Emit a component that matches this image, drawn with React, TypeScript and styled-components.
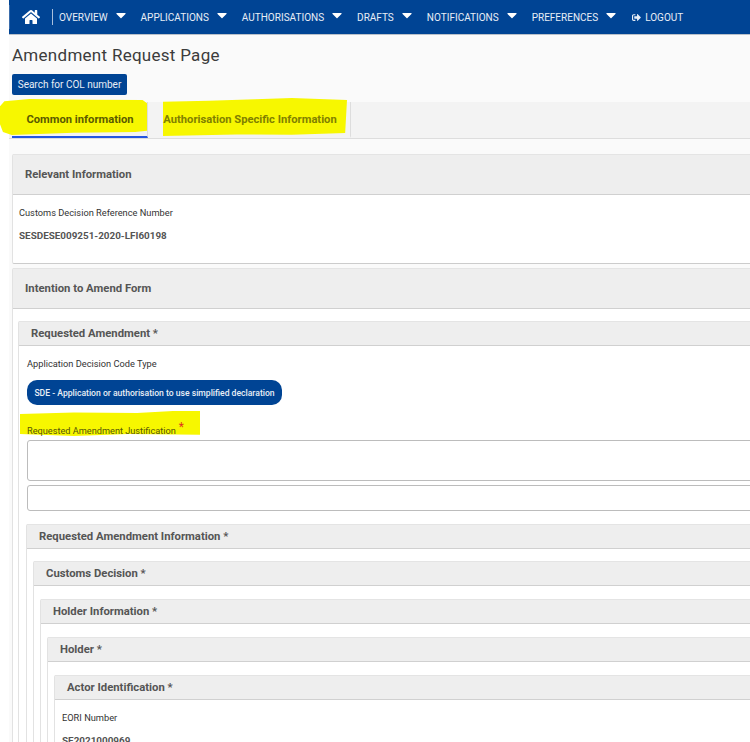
import styled, { createGlobalStyle } from 'styled-components';
import { FaHome, FaCaretDown, FaSignOutAlt } from 'react-icons/fa';

const GlobalStyle = createGlobalStyle`
  html, body {
    margin: 0;
    padding: 0;
    background: #fff;
    overflow: hidden;
  }
  * {
    box-sizing: border-box;
  }
`;

const Page = styled.div`
  width: 750px;
  height: 742px;
  overflow: hidden;
  padding-left: 9px;
  font-family: Roboto, 'Liberation Sans', sans-serif;
  color: #444;
`;

const Canvas = styled.div`
  width: 800px;
  height: 742px;
  background: #fafafa;
`;

const NavBar = styled.nav`
  height: 35px;
  background: #004494;
  border-bottom: 1px solid #b9c0c9;
  display: flex;
  align-items: center;
  color: #e8eef6;
  font-size: 10px;
`;

const HomeLink = styled.div`
  width: 43px;
  height: 24px;
  padding-left: 12px;
  border-left: 1px solid #3a6cab;
  display: flex;
  align-items: center;
  svg {
    font-size: 18px;
    color: #fff;
  }
`;

const NavDivider = styled.span`
  width: 1px;
  height: 16px;
  background: #a9bfdc;
  margin-right: 6px;
`;

const NavItem = styled.div`
  display: flex;
  align-items: center;
  margin-right: 12px;
  white-space: nowrap;
  svg {
    margin-left: 5px;
    margin-top: -4px;
    font-size: 16px;
    color: #fff;
  }
`;

const LogoutItem = styled.div`
  display: flex;
  align-items: center;
  gap: 4px;
  margin-left: 1px;
  svg {
    font-size: 9px;
  }
`;

const Title = styled.h1`
  margin: 0;
  padding: 9px 0 0 3px;
  height: 39px;
  font-size: 17px;
  line-height: 22px;
  font-weight: 400;
  letter-spacing: 0.28px;
  color: #3c3c3c;
`;

const SearchButton = styled.button`
  display: block;
  margin-left: 3px;
  height: 21px;
  width: 115px;
  padding: 0;
  border: 0;
  border-radius: 2px;
  background: #004494;
  color: #e8eef6;
  font-family: inherit;
  font-size: 10px;
`;

const TabBar = styled.div`
  margin-top: 7px;
  height: 37px;
  background: #f3f3f3;
  border-bottom: 1px solid #ddd;
  display: flex;
  align-items: stretch;
  padding-left: 3px;
  position: relative;
`;

const Tab = styled.div<{ $active?: boolean; $width: number; $inset?: number }>`
  width: ${(p) => p.$width}px;
  height: 36px;
  padding-left: ${(p) => p.$inset ?? 0}px;
  display: flex;
  align-items: center;
  justify-content: center;
  font-size: 11.2px;
  font-weight: 700;
  position: relative;
  color: ${(p) => (p.$active ? '#5a5a00' : '#808000')};
  border-right: 1px solid #ddd;
  border-bottom: 2px solid ${(p) => (p.$active ? '#2456e0' : 'transparent')};
`;

const Marker = styled.span<{ $left: number; $width: number; $top: number; $height: number; $clip: string }>`
  position: absolute;
  left: ${(p) => p.$left}px;
  top: ${(p) => p.$top}px;
  width: ${(p) => p.$width}px;
  height: ${(p) => p.$height}px;
  background: #f7f700;
  clip-path: polygon(${(p) => p.$clip});
`;

const Stack = styled.div`
  padding: 15px 0 0 3px;
`;

const Panel = styled.section<{ $gap?: number }>`
  background: #fff;
  border-left: 1px solid #e2e2e2;
  border-bottom: 1px solid #ccc;
  border-radius: 2px;
  margin-top: ${(p) => p.$gap ?? 0}px;
`;

const PanelHead = styled.header<{ $size?: 'big' | 'small' }>`
  height: ${(p) => (p.$size === 'big' ? 41 : 25)}px;
  background: #eee;
  border-top: 1px solid #e4e4e4;
  border-bottom: 1px solid #d0d0d0;
  padding-left: 12px;
  display: flex;
  align-items: center;
  font-size: 11.3px;
  font-weight: 700;
  color: #555;
  white-space: nowrap;
`;

const Relevant = styled.div`
  height: 68px;
  padding: 12px 0 0 6px;
`;

const FieldLabel = styled.div<{ $indent?: number }>`
  margin-left: ${(p) => p.$indent ?? 0}px;
  font-size: 9.25px;
  line-height: 12px;
  color: #333;
`;

const FieldValue = styled.div`
  margin-top: 10px;
  font-size: 9.9px;
  line-height: 13px;
  font-weight: 700;
  color: #555;
`;

const FormBody = styled.div`
  padding: 12px 0 0 5px;
`;

const Indented = styled.div<{ $left: number; $top: number }>`
  padding: ${(p) => p.$top}px 0 0 ${(p) => p.$left}px;
`;

const Chip = styled.div`
  margin: 10px 0 0 8px;
  height: 25px;
  width: 255px;
  border-radius: 10px;
  background: #004494;
  color: #e8eef6;
  font-size: 8.6px;
  font-weight: 500;
  display: flex;
  align-items: center;
  justify-content: center;
  white-space: nowrap;
`;

const JustifyLabel = styled.div`
  position: relative;
  margin: 6px 0 0 8px;
  height: 25px;
  padding-top: 13px;
  font-size: 9.2px;
  line-height: 12px;
  color: #55550a;
`;

const JustifyText = styled.span`
  position: relative;
`;

const Required = styled.span`
  position: relative;
  top: -3px;
  margin-left: 3px;
  color: #e0341e;
  font-size: 12px;
`;

const TextArea = styled.div<{ $height: number; $gap: number }>`
  margin: ${(p) => p.$gap}px 0 0 8px;
  height: ${(p) => p.$height}px;
  background: #fff;
  border: 1px solid #bcbcbc;
  border-radius: 3px;
`;

const navItems = ['OVERVIEW', 'APPLICATIONS', 'AUTHORISATIONS', 'DRAFTS', 'NOTIFICATIONS', 'PREFERENCES'];

export default function App() {
  return (
    <Page>
      <GlobalStyle />
      <Canvas>
        <NavBar>
          <HomeLink>
            <FaHome />
          </HomeLink>
          <NavDivider />
          {navItems.map((label) => (
            <NavItem key={label}>
              {label}
              <FaCaretDown />
            </NavItem>
          ))}
          <LogoutItem>
            <FaSignOutAlt />
            LOGOUT
          </LogoutItem>
        </NavBar>

        <Title>Amendment Request Page</Title>
        <SearchButton>Search for COL number</SearchButton>

        <TabBar>
          <Marker
            $left={-9}
            $top={-3}
            $width={147}
            $height={36}
            $clip="3% 6%, 20% 0, 60% 2%, 97% 3%, 100% 12%, 100% 88%, 92% 92%, 50% 94%, 8% 100%, 2% 92%, 0 70%, 0 20%"
          />
          <Marker
            $left={154}
            $top={-4}
            $width={184}
            $height={38}
            $clip="0 10%, 25% 7%, 50% 3%, 70% 0, 100% 5%, 99% 92%, 70% 97%, 40% 96%, 0 100%"
          />
          <Tab $active $width={136} $inset={1}>
            Common information
          </Tab>
          <Tab $width={203} $inset={2}>
            Authorisation Specific Information
          </Tab>
        </TabBar>

        <Stack>
          <Panel>
            <PanelHead $size="big">Relevant Information</PanelHead>
            <Relevant>
              <FieldLabel>Customs Decision Reference Number</FieldLabel>
              <FieldValue>SESDESE009251-2020-LFI60198</FieldValue>
            </Relevant>
          </Panel>

          <Panel $gap={4}>
            <PanelHead $size="big">Intention to Amend Form</PanelHead>
            <FormBody>
              <Panel>
                <PanelHead>Requested Amendment *</PanelHead>
                <Indented $left={0} $top={12}>
                  <FieldLabel $indent={8}>Application Decision Code Type</FieldLabel>
                  <Chip>SDE - Application or authorisation to use simplified declaration</Chip>
                  <JustifyLabel>
                    <Marker
                      $left={-7}
                      $top={0}
                      $width={180}
                      $height={25}
                      $clip="0 12%, 30% 6%, 65% 8%, 85% 0, 100% 0, 100% 95%, 60% 92%, 30% 100%, 0 92%"
                    />
                    <JustifyText>Requested Amendment Justification</JustifyText>
                    <Required>*</Required>
                  </JustifyLabel>
                  <TextArea $height={41} $gap={4} />
                  <TextArea $height={26} $gap={4} />
                  <Indented $left={7} $top={13}>
                    <Panel>
                      <PanelHead>Requested Amendment Information *</PanelHead>
                      <Indented $left={6} $top={12}>
                        <Panel>
                          <PanelHead>Customs Decision *</PanelHead>
                          <Indented $left={6} $top={13}>
                            <Panel>
                              <PanelHead>Holder Information *</PanelHead>
                              <Indented $left={6} $top={13}>
                                <Panel>
                                  <PanelHead>Holder *</PanelHead>
                                  <Indented $left={6} $top={13}>
                                    <Panel>
                                      <PanelHead>Actor Identification *</PanelHead>
                                      <Indented $left={7} $top={12}>
                                        <FieldLabel>EORI Number</FieldLabel>
                                        <FieldValue>SE2021000969</FieldValue>
                                      </Indented>
                                    </Panel>
                                  </Indented>
                                </Panel>
                              </Indented>
                            </Panel>
                          </Indented>
                        </Panel>
                      </Indented>
                    </Panel>
                  </Indented>
                </Indented>
              </Panel>
            </FormBody>
          </Panel>
        </Stack>
      </Canvas>
    </Page>
  );
}
